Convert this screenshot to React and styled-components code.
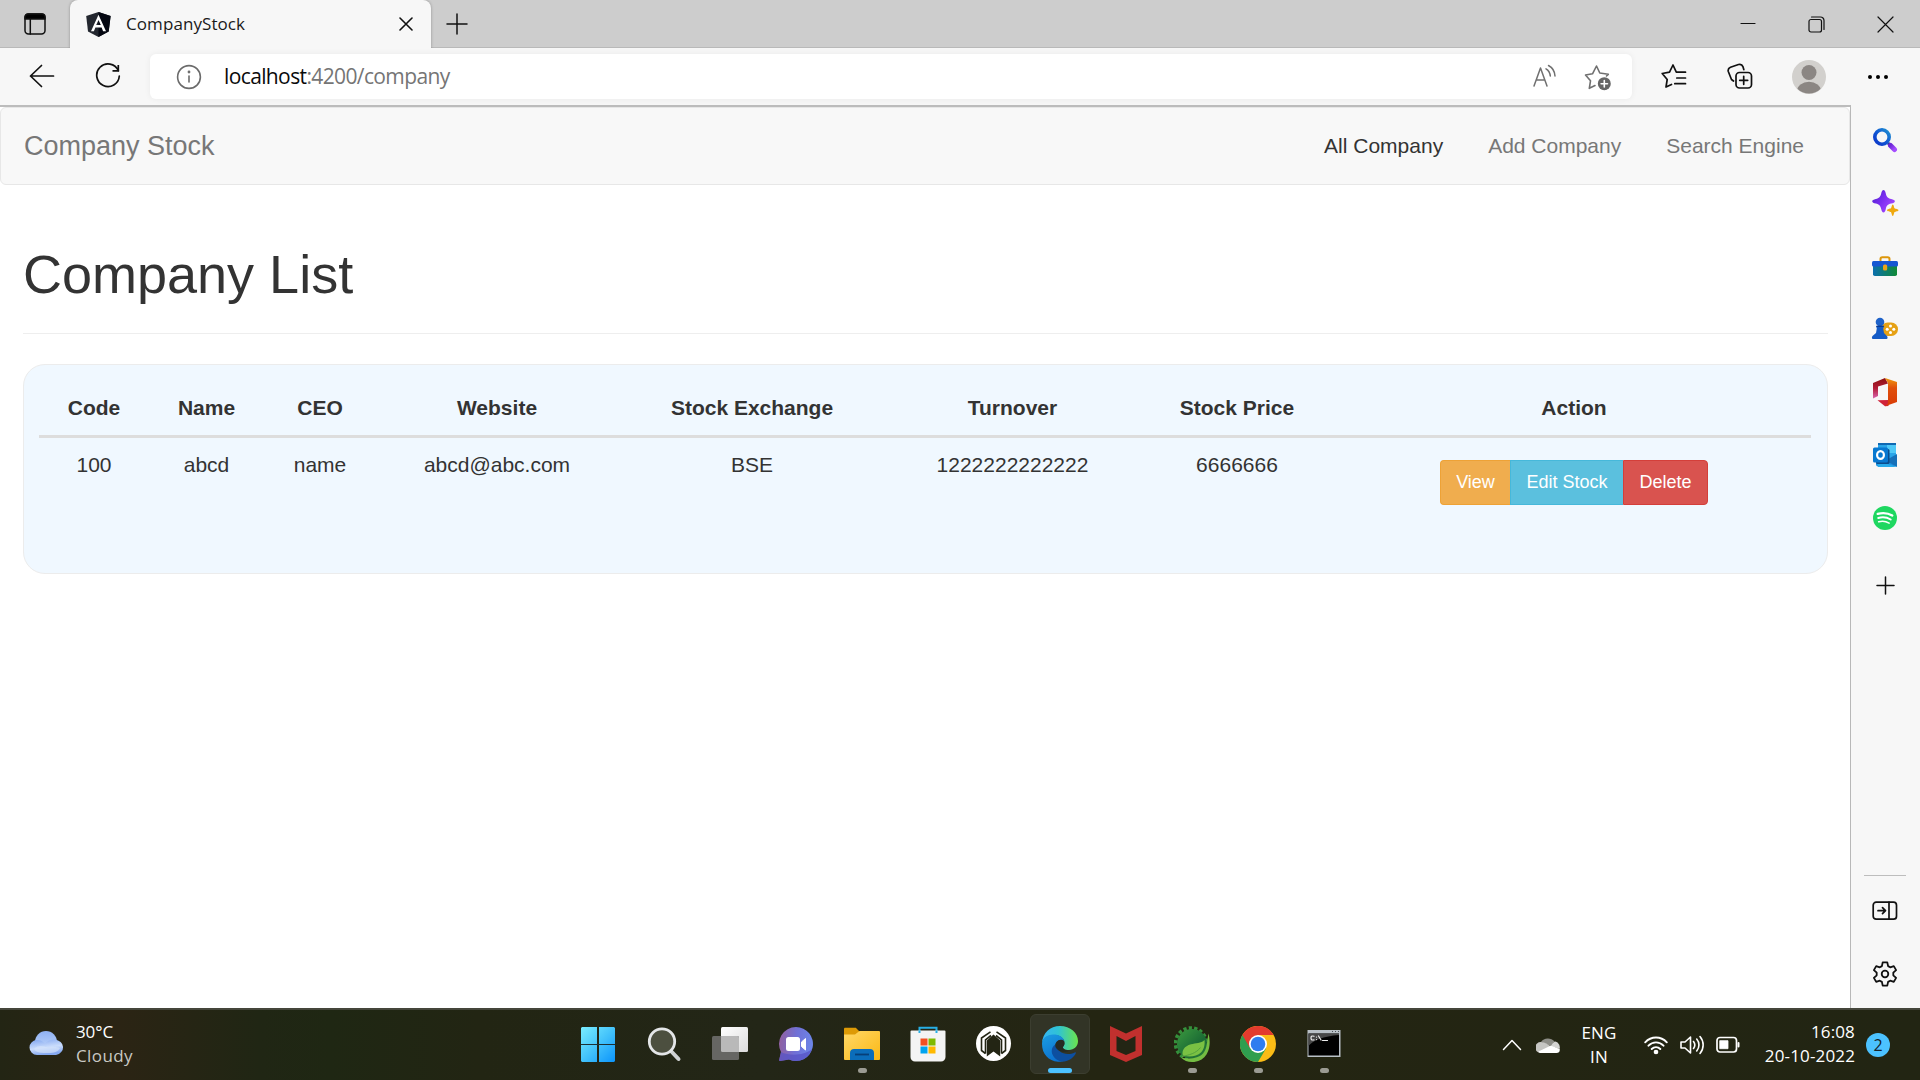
import React from "react";
import styled, { createGlobalStyle } from "styled-components";

const segoe = '"Open Sans", "Noto Sans", sans-serif';
const arial = '"Liberation Sans", Arial, sans-serif';

const GlobalStyle = createGlobalStyle`
  *, *::before, *::after { box-sizing: border-box; }
  body { margin: 0; background: #fff; overflow: hidden; }
  svg { display: block; flex: none; }
`;

const Desktop = styled.div`
  display: flex;
  flex-direction: column;
  width: 1920px;
  height: 1080px;
  overflow: hidden;
  background: #f7f7f7;
`;

/* ---------- browser frame ---------- */

const TabStrip = styled.header`
  display: flex;
  align-items: stretch;
  height: 48px;
  flex: none;
  background: #cdcdcd;
  box-shadow: inset 0 -1px 0 #b9b9b9;
`;

const StripCell = styled.div`
  display: flex;
  align-items: center;
  justify-content: center;
  width: ${(p) => p.$width}px;
`;

const Tab = styled.div`
  display: flex;
  align-items: center;
  width: 361px;
  padding: 0 18px 0 16px;
  background: #f7f7f7;
  border-radius: 8px 8px 0 0;
  box-shadow: 0 0 3px rgba(0, 0, 0, 0.3);
  clip-path: inset(0 -4px 0 -4px);
`;

const TabTitle = styled.span`
  flex: 1;
  padding-left: 15px;
  font: 17px/24px ${segoe};
  letter-spacing: 0.08px;
  color: #1a1a1a;
`;

const WindowControls = styled.div`
  display: flex;
  margin-left: auto;
`;

const Toolbar = styled.div`
  display: flex;
  align-items: center;
  height: 57px;
  flex: none;
  padding: 0 10px 0 9px;
  background: #f7f7f7;
`;

const ToolCell = styled.div`
  display: flex;
  align-items: center;
  justify-content: center;
  width: ${(p) => p.$width}px;
  height: 45px;
  padding-bottom: ${(p) => p.$lift || 0}px;
`;

const AddressBar = styled.div`
  display: flex;
  align-items: center;
  width: 1482px;
  height: 45px;
  margin: 0 8px 0 9px;
  padding: 0 7px 0 26px;
  background: #fff;
  border-radius: 6px;
  box-shadow: 0 0 6px rgba(0, 0, 0, 0.06);
`;

const Url = styled.div`
  flex: 1;
  padding: 0 0 2px 22px;
  font: 21px/30px ${segoe};
  letter-spacing: -0.62px;
  color: #757575;
`;

const UrlHost = styled.span`
  color: #0a0a0a;
`;

const Body = styled.div`
  display: flex;
  flex: 1;
  min-height: 0;
`;

const Viewport = styled.main`
  width: 1851px;
  background: #fff;
  border-top: 2px solid #bcbcbc;
  border-right: 1px solid #b8b8b8;
  font-family: ${arial};
  color: #333;
`;

/* ---------- page ---------- */

const Navbar = styled.nav`
  display: flex;
  align-items: center;
  justify-content: space-between;
  height: 78px;
  padding: 0 45px 0 23px;
  background: #f8f8f8;
  border: 1px solid #e7e7e7;
  border-radius: 6px;
`;

const Brand = styled.span`
  font-size: 27px;
  line-height: 30px;
  color: #777;
`;

const NavLinks = styled.div`
  display: flex;
  gap: 45px;
`;

const NavLink = styled.span`
  font-size: 21px;
  line-height: 30px;
  color: ${(p) => (p.$active ? "#333" : "#777")};
`;

const Content = styled.section`
  padding: 59px 22px 0 23px;
`;

const Title = styled.h1`
  margin: 0;
  padding-bottom: 29px;
  border-bottom: 1px solid #eee;
  font-size: 54px;
  font-weight: 400;
  line-height: 60px;
`;

const Panel = styled.div`
  height: 210px;
  margin-top: 30px;
  padding: 15px;
  background: #f0f8ff;
  border: 1px solid #ececec;
  border-radius: 22px;
`;

const Table = styled.table`
  width: 1772px;
  table-layout: fixed;
  border-collapse: separate;
  border-spacing: 0;
  font-size: 21px;
  line-height: 30px;
  text-align: center;
`;

const HeadCell = styled.th`
  width: ${(p) => p.$width}px;
  padding: 13px 0 12px;
  border-bottom: 3px solid #ddd;
  &:last-child { padding-left: 2px; }
`;

const Cell = styled.td`
  padding: 12px 0;
  vertical-align: top;
  &:last-child { padding-left: 2px; }
`;

const ButtonGroup = styled.div`
  display: inline-flex;
  margin-top: 10px;
  vertical-align: top;
`;

const Button = styled.button`
  width: ${(p) => p.$width}px;
  height: 45px;
  padding: 0;
  background: ${(p) => p.$fill};
  border: 1px solid ${(p) => p.$edge};
  color: #fff;
  font: 18px/27px ${arial};
  &:first-child { border-radius: 4px 0 0 4px; border-right: 0; }
  &:last-child { border-radius: 0 4px 4px 0; }
  &:nth-child(2) { border-right: 0; }
`;

/* ---------- edge sidebar ---------- */

const Sidebar = styled.aside`
  display: flex;
  flex-direction: column;
  align-items: center;
  flex: 1;
  padding: 3px 1px 3px 0;
  background: #f7f7f7;
`;

const SideCell = styled.div`
  display: flex;
  align-items: center;
  justify-content: center;
  width: 100%;
  height: ${(p) => p.$height || 63}px;
`;

const SideRule = styled.div`
  width: 42px;
  height: 1px;
  margin: auto 0 3px;
  background: #bdbdbd;
`;

/* ---------- taskbar ---------- */

const Taskbar = styled.footer`
  display: flex;
  height: 72px;
  flex: none;
  border-top: 2px solid #45463b;
  background: linear-gradient(90deg, #232514 0, #2b2414 120px, #202614 260px, #1f2713 330px, #222513 480px, #232617 760px, #242512 1100px, #222513 1920px);
  font-family: ${segoe};
`;

const Weather = styled.div`
  display: flex;
  width: 565px;
  padding: 11px 0 0 29px;
`;

const WeatherText = styled.div`
  padding-left: 11px;
  margin-top: -1px;
  font-size: 17px;
  line-height: 24px;
  letter-spacing: -0.1px;
  color: #fff;
`;

const Muted = styled.div`
  color: #c9c9c4;
  letter-spacing: 0.4px;
`;

const AppButton = styled.div`
  display: flex;
  flex-direction: column;
  align-items: center;
  gap: 6px;
  width: 60px;
  height: 60px;
  margin: 4px 3px 0;
  padding-top: 11px;
  border: 1px solid ${(p) => (p.$state === "active" ? "#3c3e30" : "transparent")};
  border-radius: 6px;
  background: ${(p) => (p.$state === "active" ? "#323426" : "transparent")};
`;

const Indicator = styled.div`
  width: ${(p) => (p.$state === "active" ? 24 : 9)}px;
  height: 5px;
  border-radius: 3px;
  background: ${(p) => (p.$state === "active" ? "#4cc2ff" : "#9b9b93")};
`;

const Tray = styled.div`
  display: flex;
  align-items: center;
  justify-content: flex-end;
  flex: 1;
  padding: 0 30px 0 0;
  color: #fff;
`;

const TrayText = styled.div`
  width: ${(p) => p.$width}px;
  margin-top: ${(p) => p.$shift || 0}px;
  font-size: 17px;
  line-height: 24px;
  letter-spacing: ${(p) => p.$tracking || 0}px;
  text-align: ${(p) => p.$align};
`;

const TrayIcons = styled.div`
  display: flex;
  align-items: center;
  gap: 12px;
  padding: 0 0 0 6px;
`;

const Badge = styled.div`
  display: flex;
  align-items: center;
  justify-content: center;
  width: 24px;
  height: 24px;
  margin-left: 11px;
  border-radius: 50%;
  background: #4cc2ff;
  color: #14222b;
  font-size: 16px;
  line-height: 24px;
`;

/* ---------- line icons ---------- */

const Line = ({ w, h, sw = 1.7, color = "#111", children }) => (
  <svg width={w} height={h} viewBox={`0 0 ${w} ${h}`} fill="none" stroke={color} strokeWidth={sw} strokeLinecap="round" strokeLinejoin="round">
    {children}
  </svg>
);

const TabActionsIcon = () => (
  <Line w={22} h={22} sw={1.5}>
    <rect x="1" y="1" width="20" height="20" rx="3.5" />
    <path d="M1 6V4a3 3 0 0 1 3-3h14a3 3 0 0 1 3 3v2z" fill="#000" />
    <path d="M6.3 6v15" />
  </Line>
);

const AngularIcon = () => (
  <svg width="25" height="25" viewBox="0 0 25 25">
    <path d="M12.5 0 24.6 4 22.7 19.5 12.5 25 2 19.5 .2 4z" fill="#23272f" />
    <path d="M12.5 0 24.6 4 22.7 19.5 12.5 25z" fill="#050812" />
    <path d="M12.5 2.8 5 19.2h2.9l1.5-3.8h6.2l1.5 3.8H20zm0 5.2 2.3 5.1h-4.6z" fill="#fff" />
  </svg>
);

const RefreshIcon = () => (
  <Line w={26} h={26}>
    <path d="M23.3 7.5A11.3 11.3 0 1 0 24.3 13" />
    <path d="M23.3 2v5.8h-5.8" strokeLinecap="butt" strokeLinejoin="miter" />
  </Line>
);

const InfoIcon = () => (
  <Line w={26} h={26} color="#6b6b6b" sw={1.6}>
    <circle cx="13" cy="13" r="11.4" />
    <path d="M13 12v6" />
    <circle cx="13" cy="8" r=".6" fill="#6b6b6b" />
  </Line>
);

const ReadAloudIcon = () => (
  <Line w={26} h={26} color="#707070" sw={1.5}>
    <path d="m3 23 6.500-18L16 23M5.300 17h8.500" />
    <path d="M15 5.800c2.500 1.400 4 4 4.300 7.200M17.500 2.500c4 2.200 6.300 6 6.500 10.500" />
  </Line>
);

const StarPlusIcon = () => (
  <Line w={28} h={28} color="#707070" sw={1.6}>
    <path d="M11 22.500 5.300 25.300l1.200-7.500L1.500 12l7-1.200L12.500 3l3.300 7 8.500 1.300L22.500 13" />
    <circle cx="20.300" cy="20.700" r="6.500" fill="#666" stroke="none" />
    <path d="M20.300 17.500v6.400M17.100 20.700h6.400" stroke="#fff" />
  </Line>
);

const FavoritesIcon = () => (
  <Line w={26} h={26}>
    <path d="M10.500 21.500 5 24l1.200-7.500L1.200 10.500 8.500 9.200 12 2l3.300 7.200h9.200M15.800 15h8.700M13.800 20.700h10.700" />
  </Line>
);

const CollectionsIcon = () => (
  <Line w={26} h={26}>
    <rect x="9" y="9.500" width="15.500" height="15.500" rx="3.500" />
    <path d="M16.700 13.300v8M12.700 17.300h8M6.500 18 4.500 16.500 1.300 8.500C.8 6.500 1.600 5 3.500 4.200L11.500 1.500c2.200-.6 3.700.2 4.400 2.100l.9 3" />
  </Line>
);

const AvatarIcon = () => (
  <svg width="34" height="34" viewBox="0 0 34 34">
    <defs><clipPath id="avatar"><circle cx="17" cy="17" r="16.500" /></clipPath></defs>
    <circle cx="17" cy="17" r="17" fill="#d2d0cd" />
    <g fill="#8b8683" clipPath="url(#avatar)">
      <circle cx="17" cy="12.500" r="7.500" />
      <ellipse cx="17" cy="31" rx="12" ry="9.300" />
    </g>
  </svg>
);

/* ---------- sidebar icons ---------- */

const SearchSide = () => (
  <svg width="26" height="26" viewBox="0 0 26 26">
    <defs>
      <linearGradient id="lens" x1="0" y1="1" x2="1" y2="0"><stop stopColor="#0b35c8" /><stop offset=".5" stopColor="#1158d4" /><stop offset="1" stopColor="#1f91d0" /></linearGradient>
      <linearGradient id="grip" x2="1" y2="1"><stop stopColor="#6e29d8" /><stop offset="1" stopColor="#a54cff" /></linearGradient>
    </defs>
    <path d="m16 16 3 3" stroke="#333a8a" strokeWidth="3" />
    <path d="m18.500 18.500 4 4" stroke="url(#grip)" strokeWidth="5" strokeLinecap="round" />
    <circle cx="10" cy="10" r="7.200" fill="none" stroke="url(#lens)" strokeWidth="3.600" />
  </svg>
);

const DiscoverSide = () => (
  <svg width="28" height="28" viewBox="0 0 28 28">
    <defs><linearGradient id="spark" x2="1" y2=".7"><stop stopColor="#4a22c8" /><stop offset=".5" stopColor="#7b2df0" /><stop offset="1" stopColor="#a84bff" /></linearGradient></defs>
    <path d="M12.500 1c1.200 0 1.800 1.400 2.300 3.500.8 3.600 1.900 4.700 5.400 5.500 2.300.6 3.700 1.100 3.700 2.300s-1.400 1.800-3.700 2.300c-3.500.9-4.600 2-5.400 5.500-.5 2.200-1.100 3.500-2.300 3.500s-1.800-1.300-2.300-3.500c-.9-3.500-2-4.600-5.400-5.500-2.200-.5-3.600-1.100-3.600-2.300S2.600 10.600 4.800 10c3.400-.8 4.500-1.900 5.400-5.500C10.700 2.400 11.300 1 12.500 1z" fill="url(#spark)" />
    <path d="M21.800 15.500c1 0 1.100 3.100 1.800 3.800s3.900.8 3.900 1.900-3.200 1.200-3.900 1.900-.8 3.900-1.800 3.900-1.200-3.200-1.900-3.900-3.900-.8-3.900-1.900 3.200-1.200 3.900-1.900.9-3.800 1.900-3.800z" fill="#f0a90e" />
  </svg>
);

const ToolsSide = () => (
  <svg width="26" height="22" viewBox="0 0 26 22">
    <defs><linearGradient id="box"><stop stopColor="#0b6fae" /><stop offset="1" stopColor="#118a35" /></linearGradient></defs>
    <path d="M8.500 7V4c0-1 .6-1.800 1.800-1.800h5.400c1.200 0 1.800.8 1.800 1.800v3" fill="none" stroke="#dd970c" strokeWidth="2" />
    <rect x="1" y="9" width="24" height="12" rx="1.800" fill="url(#box)" />
    <rect x="0" y="6" width="26" height="5.500" rx="1.500" fill="#1556d2" />
    <rect x="11" y="9.500" width="4.200" height="6" rx="1.500" fill="#e9a31a" />
  </svg>
);

const GamesSide = () => (
  <svg width="28" height="24" viewBox="0 0 28 24">
    <rect x="10" y="5.500" width="17" height="13.500" rx="6.700" fill="#e6a114" />
    <g fill="#fff"><circle cx="19.500" cy="9" r="1.500" /><circle cx="19.500" cy="15.500" r="1.500" /><circle cx="16.200" cy="12.200" r="1.500" /><circle cx="22.800" cy="12.200" r="1.500" /></g>
    <circle cx="9" cy="5" r="4.300" fill="#1e62c9" />
    <path d="M5 9h8.200l-1 2.500.8 4.500 3 3c.8 1 .8 3-.5 3H2c-1.300 0-1.400-2-.5-3L5 16l.8-4.500z" fill="#145bc6" />
    <path d="M5.500 9.300h7.300" stroke="#0c3a91" strokeWidth="1.400" />
  </svg>
);

const OfficeSide = () => (
  <svg width="26" height="30" viewBox="0 0 26 30">
    <defs>
      <linearGradient id="officeL" y2="1" x2="0"><stop stopColor="#8c1010" /><stop offset=".5" stopColor="#b31d38" /><stop offset="1" stopColor="#d866b0" /></linearGradient>
      <linearGradient id="officeR" y2="1" x2="0"><stop stopColor="#f09a10" /><stop offset=".35" stopColor="#e0500c" /><stop offset="1" stopColor="#d93a06" /></linearGradient>
    </defs>
    <path d="M13 1 1 6v15.500L6 19V9.500L16 6.500z" fill="url(#officeL)" />
    <path d="m5.500 23.300 11-.3v6L13 29.300z" fill="#cf2238" />
    <path d="M13 1 25 5v20l-12 4.300 3-3V6z" fill="url(#officeR)" />
  </svg>
);

const OutlookSide = () => (
  <svg width="26" height="26" viewBox="0 0 26 26">
    <rect x="6" y="1" width="18" height="18" fill="#2aa5e8" />
    <rect x="6" y="1" width="18" height="2" fill="#1069b3" />
    <path d="M15 3h9v8h-9z" fill="#4fc8f7" />
    <path d="m4 12 21 12.500H6a2 2 0 0 1-2-2z" fill="#1d93e2" />
    <path d="M25 12v13L13.500 18.500z" fill="#1670b9" />
    <path d="M5 18.500 25 25H6z" fill="#28aaea" />
    <rect x="4" y="7" width="13.500" height="15" rx="1.500" fill="#0b4c8c" />
    <rect x="1" y="5.500" width="15" height="15" rx="1.500" fill="#0878d0" />
    <ellipse cx="8.500" cy="13" rx="3.400" ry="3.900" fill="none" stroke="#fff" strokeWidth="2.200" />
  </svg>
);

const SpotifySide = () => (
  <svg width="24" height="24" viewBox="0 0 24 24">
    <circle cx="12" cy="12" r="12" fill="#1ed760" />
    <g fill="none" stroke="#fff" strokeLinecap="round">
      <path d="M4.700 7.900c4.800-1.400 10.500-.8 14.600 1.600" strokeWidth="2.300" />
      <path d="M5.200 12c4.200-1.200 8.800-.7 12.500 1.500" strokeWidth="1.900" />
      <path d="M5.700 15.800c3.700-.9 7.300-.5 10.400 1.300" strokeWidth="1.600" />
    </g>
  </svg>
);

const PanelSide = () => (
  <Line w={26} h={20} sw={1.7}>
    <rect x="1.200" y="1.200" width="23.300" height="17" rx="3" />
    <path d="M17 1.200v17M6 9.700h7M10.500 6.700l3 3-3 3" />
  </Line>
);

const GearSide = () => (
  <Line w={26} h={26} sw={1.8}>
    <circle cx="13" cy="13" r="3.300" />
    <path d="M10.700 1.400h4.600l.8 3.700 2.100 1.200 3.600-1.200 2.300 4-2.800 2.600v2.600l2.800 2.600-2.300 4-3.600-1.200-2.100 1.200-.8 3.700h-4.600l-.8-3.700-2.100-1.200-3.600 1.200-2.300-4 2.800-2.600v-2.600L1.900 9.100l2.300-4 3.600 1.200 2.100-1.200z" />
  </Line>
);

/* ---------- taskbar icons ---------- */

const CloudIcon = () => (
  <svg width="36" height="44" viewBox="0 0 36 44">
    <defs>
      <linearGradient id="cloudA" y2="1" x2="0"><stop stopColor="#8fb1f3" /><stop offset="1" stopColor="#c5dafb" /></linearGradient>
      <linearGradient id="cloudB" y2="1" x2=".3"><stop stopColor="#7fa4ef" /><stop offset=".6" stopColor="#cbddfc" /><stop offset="1" stopColor="#86a9f0" /></linearGradient>
    </defs>
    <circle cx="17" cy="21" r="11" fill="url(#cloudA)" />
    <path d="M8 19c4 0 6 1.500 8 4 2-2.800 5-4.500 10-4.500a10 8 0 0 1 1 15.500H8A7.500 7.500 0 0 1 8 19z" fill="url(#cloudB)" />
    <path d="M5 28c4-4 8-3 12-2s8-1 14 1c-2 4-6 5-12 5S7 32 5 28z" fill="#d6e4fb" opacity=".65" />
  </svg>
);

const Glyph = ({ children }) => <svg width="36" height="36" viewBox="0 0 36 36">{children}</svg>;

const StartIcon = () => (
  <Glyph>
    <defs><linearGradient id="start" x1="0" y1="0" x2="36" y2="36" gradientUnits="userSpaceOnUse"><stop stopColor="#7df0ff" /><stop offset=".5" stopColor="#45c4fb" /><stop offset="1" stopColor="#0a93fb" /></linearGradient></defs>
    <path d="M2 1h15v17H1V2zM19 1h15l1 1v16H19zM1 19h16v17H2l-1-1zM19 19h16v16l-1 1H19z" fill="url(#start)" />
    <path d="M1 18.500h34" stroke="#1d3035" />
  </Glyph>
);

const SearchIcon = () => (
  <Glyph>
    <path d="m24 24 8.500 9" stroke="#cfd2d4" strokeWidth="4" strokeLinecap="round" />
    <circle cx="16" cy="15.500" r="12.700" fill="#4c4f3f" stroke="#e4e6e8" strokeWidth="2.800" />
  </Glyph>
);

const TaskViewIcon = () => (
  <Glyph>
    <defs><linearGradient id="tv" x2="1" y2="1"><stop stopColor="#fff" /><stop offset="1" stopColor="#dcdcdc" /></linearGradient></defs>
    <rect x="9" y="1" width="27" height="25" rx="1.500" fill="url(#tv)" />
    <rect x="0" y="10" width="27" height="24" rx="1.500" fill="#666663" />
    <path d="M9 10h16.500A1.500 1.500 0 0 1 27 11.500V26H10.500A1.500 1.500 0 0 1 9 24.500z" fill="#b9b9b9" />
  </Glyph>
);

const ChatIcon = () => (
  <Glyph>
    <defs><linearGradient id="chat" x1="0" y1=".4" x2="1" y2=".5"><stop stopColor="#91609f" /><stop offset=".5" stopColor="#7070d6" /><stop offset="1" stopColor="#6c86e8" /></linearGradient></defs>
    <path d="M18 1a17 17 0 1 1-7 32.500L2 35c-.8 0-1-.6-.8-1.200L3 26A17 17 0 0 1 18 1z" fill="url(#chat)" />
    <path d="M3 26c8 4 23 4 31-3a17 17 0 0 1-23 10.500L2 35c-.8 0-1-.6-.8-1.200z" fill="#5753c4" opacity=".75" />
    <rect x="8" y="11" width="14" height="14" rx="2.500" fill="#fff" />
    <path d="m23.500 16 4-3.500v11.500l-4-3.500z" fill="#fff" stroke="#fff" strokeLinejoin="round" />
  </Glyph>
);

const FolderIcon = () => (
  <Glyph>
    <defs><linearGradient id="folder" x2="1" y2="1"><stop stopColor="#ffd868" /><stop offset="1" stopColor="#fbb814" /></linearGradient></defs>
    <path d="M0 3c0-.8.500-1.200 1.300-1.200h10.500L15 5v5H0z" fill="#dd9a06" />
    <path d="M0 8.500h11L15.500 5H35a1 1 0 0 1 1 1v27a1 1 0 0 1-1 1H1a1 1 0 0 1-1-1z" fill="url(#folder)" />
    <path d="M6 34v-7c0-2.500 1.500-4 4-4h16c2.500 0 4 1.500 4 4v7z" fill="#0b6dba" />
    <path d="M11 28.500h14" stroke="#073f78" strokeWidth="1.800" />
  </Glyph>
);

const StoreIcon = () => (
  <Glyph>
    <path d="M9.500 8V1.700h17V8" fill="none" stroke="#27afe5" strokeWidth="2" />
    <path d="M.500 5.500a1 1 0 0 1 1-1h33a1 1 0 0 1 1 1V31a4.500 4.500 0 0 1-4.500 4.500H5A4.500 4.500 0 0 1 .500 31z" fill="#f4f4f4" />
    <path d="M9.500 4.500V7M26.500 4.500V7" stroke="#27afe5" strokeWidth="2" />
    <path d="M10.500 12.500h7v7h-7z" fill="#f25022" /><path d="M18.500 12.500h7v7h-7z" fill="#7fba00" />
    <path d="M10.500 20.500h7v7h-7z" fill="#00a4ef" /><path d="M18.500 20.500h7v7h-7z" fill="#ffb900" />
  </Glyph>
);

const RingIcon = () => (
  <Glyph>
    <circle cx="17.500" cy="17.500" r="17.500" fill="#fff" />
    <g fill="none" stroke="#232514" strokeWidth="1.600">
      <path d="M9.500 27.500 5.500 24.500V12L14.500 5.800M25.500 27.500l4-3V12L20.500 5.800" />
      <path d="M9.500 27.500V13.800L15 9.500M25.500 27.500V13.800L20 9.500" />
    </g>
    <path d="M10.800 14.500 17.500 8.500l6.700 6V30.500l-6.700-5-6.700 5z" fill="#232514" />
  </Glyph>
);

const EdgeIcon = () => (
  <Glyph>
    <defs>
      <linearGradient id="edgeTop"><stop stopColor="#35b4f5" /><stop offset=".45" stopColor="#2fc3d4" /><stop offset="1" stopColor="#6be34c" /></linearGradient>
      <linearGradient id="edgeBody" x2=".5" y2="1"><stop stopColor="#1b9de2" /><stop offset="1" stopColor="#0b6fce" /></linearGradient>
    </defs>
    <path d="M0 17C.600 7 8 0 18 0c10.500 0 18 7 18 15 0 5.500-4 9-9 9-4 0-6.500-1.500-6-3 .300-.8 1.600-1.500 1.600-4C22.600 12.500 18 9 11.500 9 5 9 1 13 0 17z" fill="url(#edgeTop)" />
    <path d="M0 18C0 12 5 8.600 11.500 8.600c5.500 0 9.700 2.600 10.800 6.400-1.500-1.400-3.300-1.500-4.800-1-3.500 1-5 4.500-4 8.500C15 29 21 32 28 30.500c-3 4-8 5.500-12 5.300C6.500 35 0 28 0 18z" fill="url(#edgeBody)" />
    <path d="M13.300 18.500c-3.800 2.500-4.500 7-2.300 11 2.600 4.500 7.500 6.500 11.500 6 5.500-1 9.500-4.500 11.300-8.300.3-.8-.4-1.200-1-.8-8.500 4-18-.2-19.500-7.900z" fill="#0d4fa0" />
    <path d="M13.500 21c-.5-4 1.500-6.500 4.500-7 2.500-.4 4.500 1.200 4.400 3.500 0 2-1.500 2.700-1.500 3.900 0 1.600 2.600 3.400 6.600 3.300-5 2.300-12 .8-14-3.700z" fill="#262a22" />
  </Glyph>
);

const McAfeeIcon = () => (
  <Glyph>
    <path d="M2 0 18 7.500 34 0v29L18 36 2 29z" fill="#c1302e" />
    <path d="M8.500 10 18 15l9.500-5v15L18 29 8.500 25z" fill="#232514" />
  </Glyph>
);

const SpringIcon = () => (
  <Glyph>
    <defs><linearGradient id="gear" x2="1" y2="1"><stop stopColor="#3b9a3e" /><stop offset=".6" stopColor="#1b6b35" /><stop offset="1" stopColor="#2c8038" /></linearGradient></defs>
    <circle cx="17" cy="17.500" r="15.500" fill="none" stroke="#35903b" strokeWidth="3.600" strokeDasharray="3.200 2.210" />
    <circle cx="18" cy="18" r="15" fill="url(#gear)" />
    <path d="M34.500 7.500C38 20 34 36 18 36c-4.500 0-8-1.500-11-4.500 8 2 17.500 1 22-4C33.500 22.500 33 14 34.500 7.500z" fill="#74bd43" />
    <path d="M30.500 14c-3.500 3.500-9 3-13.500 4.300C10 20.300 7.800 24.500 8.700 29.500 15 31.500 23 30.500 27 26.500c3.300-3.300 4-8 3.500-12.500z" fill="#7ac143" />
    <path d="M8 30.500C15 29 22 27.500 26.500 21.500" fill="none" stroke="#55a33d" strokeWidth="1" />
  </Glyph>
);

const ChromeIcon = () => (
  <Glyph>
    <circle cx="18" cy="18" r="18" fill="#fbbc16" />
    <path d="M18 18 2.400 9A18 18 0 0 0 18 36l8-13.500z" fill="#2f9e4f" />
    <path d="M18 9h15.600A18 18 0 0 0 2.400 9L10.200 22.500z" fill="#e33b2e" />
    <circle cx="18" cy="18" r="9" fill="#fff" />
    <circle cx="18" cy="18" r="7.300" fill="#2f7def" />
  </Glyph>
);

const TerminalIcon = () => (
  <Glyph>
    <rect x="1.500" y="4" width="33" height="27" fill="#b9c0c6" />
    <rect x="2.500" y="7.500" width="30.500" height="22" fill="#000" />
    <path d="M2.500 7.500H33V9C18 10 6 15 2.500 20z" fill="#484848" />
    <path d="M8 10.300C5.500 9.500 5 10.500 5 12s.5 2.500 3 1.800M10.500 11v.1M10.500 13.500v.1M12.500 10l2.500 4M16.500 14.500h5" fill="none" stroke="#eee" strokeWidth="1.200" strokeLinecap="round" />
    <path d="M26 5.500h1M29 5.500h1M32 5.500h1" stroke="#4b5258" />
  </Glyph>
);

const WifiIcon = () => (
  <Line w={24} h={20} color="#fff" sw={1.9}>
    <path d="M1.200 7.300c6-6.400 15.600-6.400 21.600 0M4.500 10.700c4.200-4.400 10.800-4.400 15 0M7.700 14c2.500-2.500 6.100-2.500 8.600 0" />
    <circle cx="12" cy="17" r="1.400" fill="#fff" />
  </Line>
);

const SpeakerIcon = () => (
  <Line w={24} h={22} color="#fff" sw={1.600}>
    <path d="M1 8h4l5.500-5v16L5 14H1zM13.500 7.500c1.500 2 1.500 5 0 7M16.700 5c3 3.500 3 8.500 0 12M20 2.500c4.200 5 4.200 12 0 17" />
  </Line>
);

const BatteryIcon = () => (
  <Line w={24} h={20} color="#fff" sw={1.700}>
    <rect x="1" y="2.500" width="19.500" height="14.500" rx="3" />
    <rect x="4" y="5.700" width="8" height="8" fill="#fff" strokeWidth=".8" />
    <path d="M22.500 8v3.500" strokeWidth="2" />
  </Line>
);

const OneDriveIcon = () => (
  <svg width="24" height="18" viewBox="0 0 24 18">
    <path d="M5 6a8 7 0 0 1 13.500-.5L15 10z" fill="#8e8e88" />
    <path d="M4.500 17A5 5 0 0 1 5 6c4 0 7 2.500 10 4.500L7 17z" fill="#c6c6c3" />
    <path d="M15 10c1.500-3 3-4.500 4.500-4.500A6 6 0 0 1 23.500 13z" fill="#d4d4d2" />
    <path d="M2.500 15.500 15 9.500l8.700 3.500c.5 2.500-1 4-3.200 4H5c-1 0-2-.500-2.500-1.500z" fill="#fff" />
  </svg>
);

const PlusIcon = ({ size }) => (
  <Line w={size} h={size} sw={1.5}><path d={`M${size / 2} 1v${size - 2}M1 ${size / 2}h${size - 2}`} /></Line>
);

const columns = [
  ["Code", 110, "100"],
  ["Name", 115, "abcd"],
  ["CEO", 112, "name"],
  ["Website", 242, "abcd@abc.com"],
  ["Stock Exchange", 268, "BSE"],
  ["Turnover", 253, "1222222222222"],
  ["Stock Price", 196, "6666666"],
];

const apps = [
  [StartIcon], [SearchIcon], [TaskViewIcon], [ChatIcon], [FolderIcon, "open"], [StoreIcon],
  [RingIcon], [EdgeIcon, "active"], [McAfeeIcon], [SpringIcon, "open"], [ChromeIcon, "open"], [TerminalIcon, "open"],
];

const sideApps = [SearchSide, DiscoverSide, ToolsSide, GamesSide, OfficeSide, OutlookSide, SpotifySide];

export default function App() {
  return (
    <Desktop>
      <GlobalStyle />
      <TabStrip>
        <StripCell $width={70}><TabActionsIcon /></StripCell>
        <Tab>
          <AngularIcon />
          <TabTitle>CompanyStock</TabTitle>
          <Line w={14} h={14} sw={1.6}><path d="m1 1 12 12m0-12-12 12" /></Line>
        </Tab>
        <StripCell $width={51}><PlusIcon size={22} /></StripCell>
        <WindowControls>
          <StripCell $width={69}><Line w={16} h={16} sw={1.2}><path d="M1 7.500h14" /></Line></StripCell>
          <StripCell $width={69}>
            <Line w={17} h={17} sw={1.2}>
              <rect x="1" y="3.500" width="12.500" height="12.500" rx="2" />
              <path d="M3.500 1h9A3.500 3.500 0 0 1 16 4.500v9" />
            </Line>
          </StripCell>
          <StripCell $width={69}><Line w={17} h={17} sw={1.2}><path d="m1 1 15 15M16 1 1 16" /></Line></StripCell>
        </WindowControls>
      </TabStrip>
      <Toolbar>
        <ToolCell $width={66} $lift={2}><Line w={26} h={24}><path d="M24.500 12H1.500M12.500 1.500 1.500 12l11 10.500" /></Line></ToolCell>
        <ToolCell $width={66} $lift={1}><RefreshIcon /></ToolCell>
        <AddressBar>
          <InfoIcon />
          <Url><UrlHost>localhost</UrlHost>:4200/company</Url>
          <ToolCell $width={54} $lift={2}><ReadAloudIcon /></ToolCell>
          <ToolCell $width={54}><StarPlusIcon /></ToolCell>
        </AddressBar>
        <ToolCell $width={68} $lift={1}><FavoritesIcon /></ToolCell>
        <ToolCell $width={64} $lift={1}><CollectionsIcon /></ToolCell>
        <ToolCell $width={74}><AvatarIcon /></ToolCell>
        <ToolCell $width={64}>
          <svg width="22" height="6" viewBox="0 0 22 6"><circle cx="3" cy="3" r="2" /><circle cx="11" cy="3" r="2" /><circle cx="19" cy="3" r="2" /></svg>
        </ToolCell>
      </Toolbar>
      <Body>
        <Viewport>
          <Navbar>
            <Brand>Company Stock</Brand>
            <NavLinks>
              <NavLink $active>All Company</NavLink>
              <NavLink>Add Company</NavLink>
              <NavLink>Search Engine</NavLink>
            </NavLinks>
          </Navbar>
          <Content>
            <Title>Company List</Title>
            <Panel>
              <Table>
                <thead>
                  <tr>
                    {columns.map(([name, width]) => <HeadCell key={name} $width={width}>{name}</HeadCell>)}
                    <HeadCell $width={476}>Action</HeadCell>
                  </tr>
                </thead>
                <tbody>
                  <tr>
                    {columns.map(([name, , value]) => <Cell key={name}>{value}</Cell>)}
                    <Cell>
                      <ButtonGroup>
                        <Button $width={70} $fill="#f0ad4e" $edge="#eea236">View</Button>
                        <Button $width={113} $fill="#5bc0de" $edge="#46b8da">Edit Stock</Button>
                        <Button $width={85} $fill="#d9534f" $edge="#d43f3a">Delete</Button>
                      </ButtonGroup>
                    </Cell>
                  </tr>
                </tbody>
              </Table>
            </Panel>
          </Content>
        </Viewport>
        <Sidebar>
          {sideApps.map((Icon, i) => <SideCell key={i}><Icon /></SideCell>)}
          <SideCell $height={73}><PlusIcon size={19} /></SideCell>
          <SideRule />
          <SideCell><PanelSide /></SideCell>
          <SideCell><GearSide /></SideCell>
        </Sidebar>
      </Body>
      <Taskbar>
        <Weather>
          <CloudIcon />
          <WeatherText>30°C<Muted>Cloudy</Muted></WeatherText>
        </Weather>
        {apps.map(([Icon, state], i) => (
          <AppButton key={i} $state={state}>
            <Icon />
            {state && <Indicator $state={state} />}
          </AppButton>
        ))}
        <Tray>
          <Line w={20} h={12} color="#fff" sw={1.5}><path d="m1.500 10.500 8.500-9 8.500 9" /></Line>
          <TrayText $width={14} />
          <OneDriveIcon />
          <TrayText $width={78} $align="center" $tracking={0.2}>ENG<br />IN</TrayText>
          <TrayIcons><WifiIcon /><SpeakerIcon /><BatteryIcon /></TrayIcons>
          <TrayText $width={115} $align="right" $shift={-2} $tracking={0.15}>16:08<br />20-10-2022</TrayText>
          <Badge>2</Badge>
        </Tray>
      </Taskbar>
    </Desktop>
  );
}
